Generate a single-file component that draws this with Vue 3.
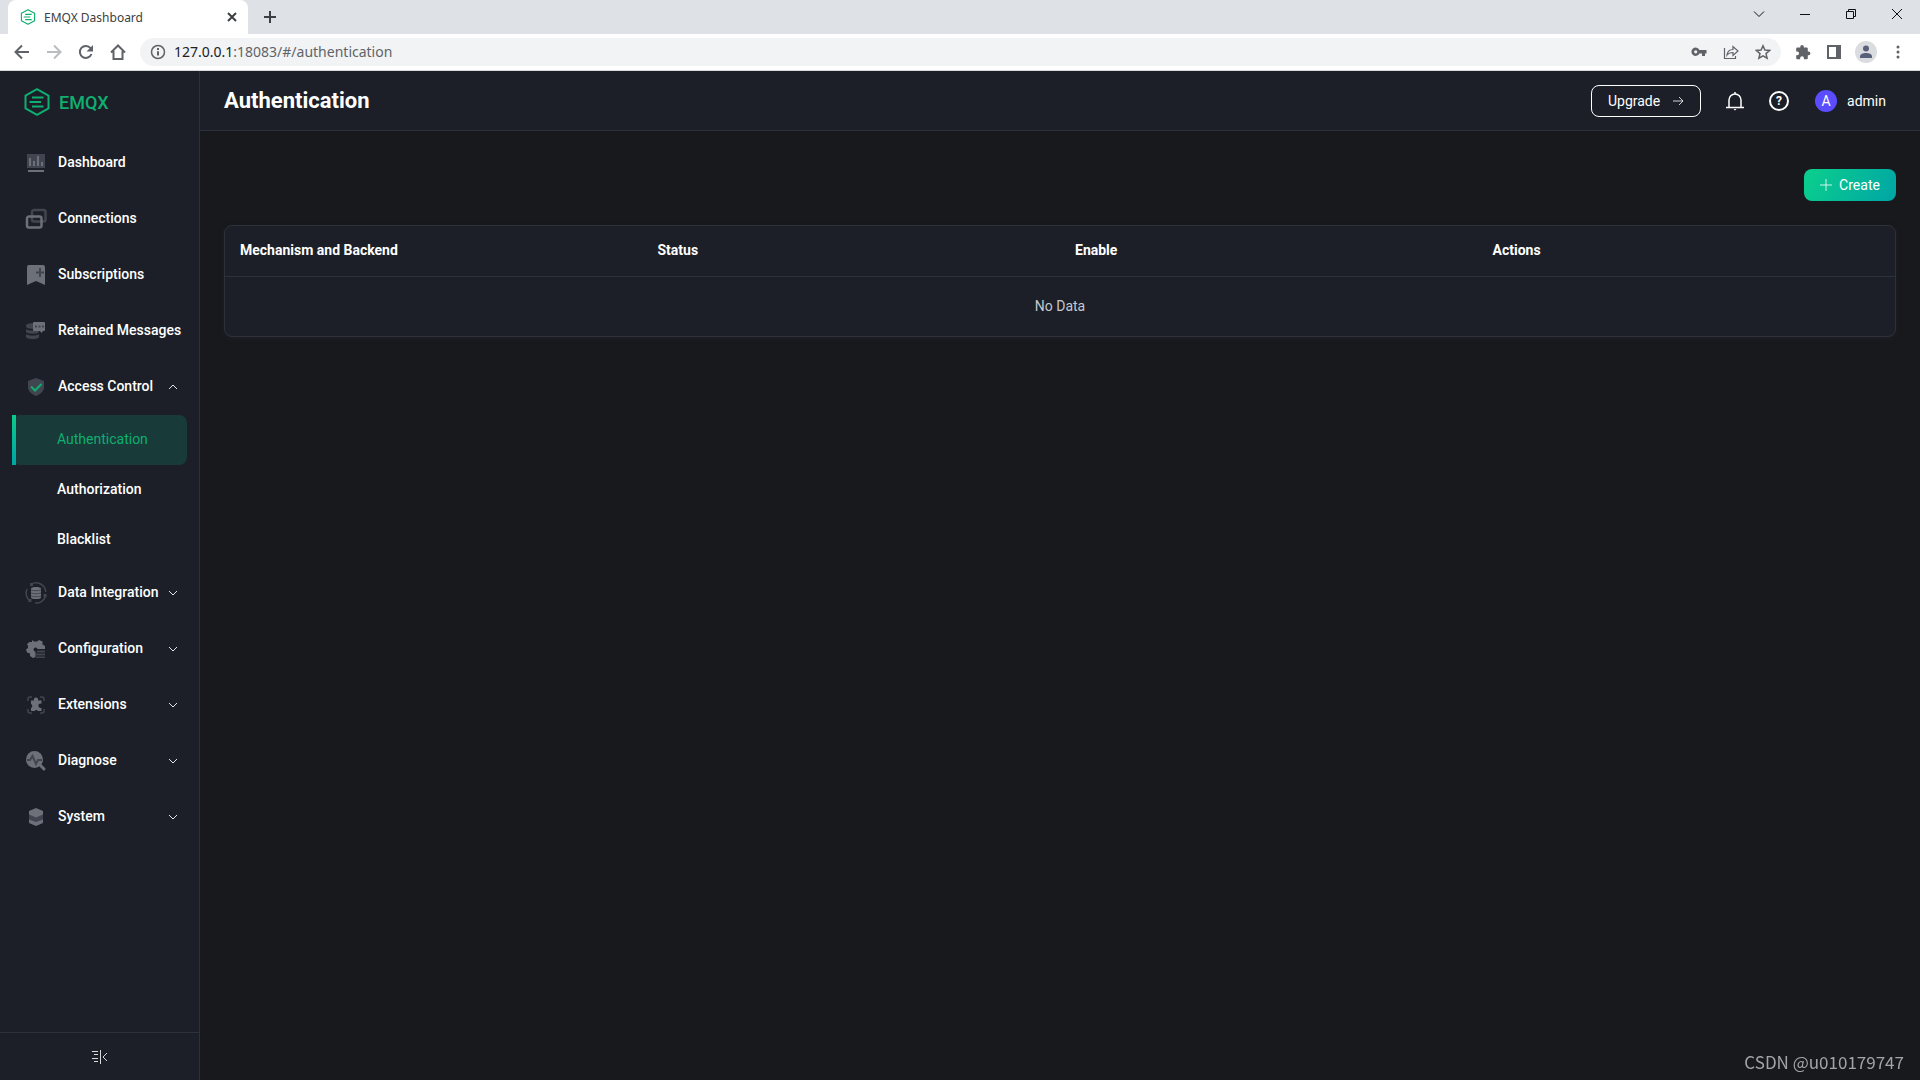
<template>
  <div class="browser">
    <header class="tab-strip">
      <div class="browser-tab">
        <svg class="favicon" viewBox="0 0 28 28">
          <path class="logo-line" :d="logoHex" />
          <path class="logo-line" :d="logoBars" />
        </svg>
        <span class="tab-title">EMQX Dashboard</span>
        <button class="plain" aria-label="Close tab">
          <svg class="glyph" viewBox="0 0 16 16"><path class="dark bold" d="M4 4l8 8M12 4l-8 8" /></svg>
        </button>
      </div>
      <button class="plain new-tab" aria-label="New tab">
        <svg class="glyph" viewBox="0 0 16 16"><path class="dark bold" d="M8 2v12M2 8h12" /></svg>
      </button>
      <div class="window-buttons">
        <button v-for="b in windowButtons" :key="b.label" class="plain" :aria-label="b.label">
          <svg class="glyph" viewBox="0 0 16 16"><path class="window-line" :d="b.d" /></svg>
        </button>
      </div>
    </header>

    <div class="toolbar">
      <div class="nav-buttons">
        <button class="plain" aria-label="Back">
          <svg class="glyph" viewBox="0 0 16 16"><path class="gray" d="M15 8H2M8 1.5L1.5 8L8 14.5" /></svg>
        </button>
        <button class="plain" aria-label="Forward">
          <svg class="glyph" viewBox="0 0 16 16"><path class="gray off" d="M1 8h13M8 1.5L14.500 8L8 14.500" /></svg>
        </button>
        <button class="plain" aria-label="Reload">
          <svg class="glyph" viewBox="0 0 16 16">
            <path class="gray" d="M13.500 10A6 6 0 1 1 12.600 4.200" />
            <path class="gray-fill" d="M15 1v6.500H8.500z" />
          </svg>
        </button>
        <button class="plain" aria-label="Home">
          <svg class="glyph" viewBox="0 0 16 16"><path class="gray" d="M1 8.500L8 1.500l7 7M3.500 7v8h9V7" /></svg>
        </button>
      </div>
      <div class="address">
        <svg class="glyph" viewBox="0 0 16 16">
          <circle class="gray thin" cx="8" cy="8" r="6.500" />
          <path class="gray" d="M8 7.200v4.300M8 4v2" />
        </svg>
        <span class="url"><b>127.0.0.1</b>:18083/#/authentication</span>
        <button class="plain" aria-label="Passwords">
          <svg class="glyph" viewBox="0 0 16 16">
            <path
              class="gray-fill"
              fill-rule="evenodd"
              d="M8.400 6H15.500V9.500H14V12H11V9.500H8.400A4.200 4.200 0 1 1 8.400 6zM4.700 6.200a1.600 1.600 0 1 0 0 3.200a1.600 1.600 0 0 0 0-3.200z"
            />
          </svg>
        </button>
        <button class="plain" aria-label="Share">
          <svg class="glyph" viewBox="0 0 16 16">
            <path class="gray fine" d="M1.500 4v10.500h11V12M4 11c.5-4 3-5.500 6-5.500V2.500L15 7l-5 4.500V8.500C7.500 8.500 5.500 9 4 11z" />
          </svg>
        </button>
        <button class="plain" aria-label="Bookmark">
          <svg class="glyph" viewBox="0 0 16 16">
            <path class="gray thin" d="M8 1.800l1.900 4.300 4.700.4-3.600 3.100 1.100 4.600L8 11.800l-4.100 2.400L5 9.600 1.400 6.500l4.700-.4z" />
          </svg>
        </button>
      </div>
      <div class="toolbar-right">
        <button class="plain wide-button" aria-label="Browser extensions">
          <svg class="glyph" viewBox="0 0 20 20"><path class="gray-fill" :d="puzzle" /></svg>
        </button>
        <button class="plain" aria-label="Side panel">
          <svg class="glyph" viewBox="0 0 16 16">
            <path class="gray" d="M2 2h12v12H2z" />
            <path class="gray-fill" d="M10 2h5v12h-5z" />
          </svg>
        </button>
        <button class="plain profile" aria-label="Profile">
          <svg class="glyph" viewBox="0 0 16 16">
            <circle class="profile-fill" cx="8" cy="4.500" r="3" />
            <path class="profile-fill" d="M2 14v-1.500C2 10 5 9 8 9s6 1 6 3.500V14z" />
          </svg>
        </button>
        <button class="plain" aria-label="Menu">
          <svg class="glyph" viewBox="0 0 16 16">
            <circle class="gray-fill" cx="8" cy="3" r="1.500" />
            <circle class="gray-fill" cx="8" cy="8" r="1.500" />
            <circle class="gray-fill" cx="8" cy="13" r="1.500" />
          </svg>
        </button>
      </div>
    </div>

    <div class="app">
      <aside class="sidebar">
        <a class="brand" href="#/">
          <svg class="logo" viewBox="0 0 28 28">
            <path class="logo-line" :d="logoHex" />
            <path class="logo-line" :d="logoBars" />
          </svg>
          <span>EMQX</span>
        </a>
        <nav class="menu">
          <template v-for="item in menu" :key="item.label">
            <a class="menu-item" :href="item.href">
              <svg class="menu-icon" viewBox="0 0 20 20">
                <path v-for="(s, i) in item.icon" :key="i" :class="s.c" :d="s.d" fill-rule="evenodd" />
              </svg>
              <span class="menu-label">{{ item.label }}</span>
              <svg v-if="item.arrow" class="chevron" viewBox="0 0 12 12">
                <path :d="item.arrow === 'up' ? 'M2 8l4-4 4 4' : 'M2 4l4 4 4-4'" />
              </svg>
            </a>
            <div v-if="item.children" class="submenu">
              <a
                v-for="child in item.children"
                :key="child"
                :class="['sub-item', { active: child === current }]"
                :href="'#/' + child.toLowerCase()"
              >
                {{ child }}
              </a>
            </div>
          </template>
        </nav>
        <button class="plain collapse" aria-label="Collapse menu">
          <svg class="glyph" viewBox="0 0 16 16">
            <path class="collapse-line" d="M0 2.500h6M2 5.500h4M0 9.500h6M2 12.500h4M8.500 1v14M15 4l-4 4 4 4" />
          </svg>
        </button>
      </aside>

      <div class="page">
        <header class="page-header">
          <h1>{{ current }}</h1>
          <button class="upgrade">
            Upgrade
            <svg class="small-glyph" viewBox="0 0 12 12"><path d="M1 6h10M7 2l4 4-4 4" /></svg>
          </button>
          <button class="plain header-icon" aria-label="Notifications">
            <svg viewBox="0 0 20 20">
              <path class="white-line" d="M1 16.500h18M4 16.500V9a6 6 0 0 1 12 0v7.500M10 3V1" />
              <path class="white-fill" d="M8.500 18h3l-1.500 1.500z" />
            </svg>
          </button>
          <button class="plain help" aria-label="Help">?</button>
          <button class="plain user">
            <span class="avatar">A</span>
            admin
          </button>
        </header>
        <main class="content">
          <button class="create">
            <svg class="small-glyph" viewBox="0 0 12 12"><path d="M6 0v12M0 6h12" /></svg>
            Create
          </button>
          <div class="card">
            <table>
              <thead>
                <tr>
                  <th v-for="c in columns" :key="c">{{ c }}</th>
                </tr>
              </thead>
              <tbody>
                <tr>
                  <td :colspan="columns.length">No Data</td>
                </tr>
              </tbody>
            </table>
          </div>
        </main>
      </div>
    </div>
    <div class="watermark">CSDN @u010179747</div>
  </div>
</template>

<script setup>
import { ref } from "vue";

const current = ref("Authentication");

const columns = ["Mechanism and Backend", "Status", "Enable", "Actions"];

const logoHex = "M14 1.200L25.500 7.600V20.400L14 26.800L2.500 20.400V7.600z";
const logoBars = "M9 9.500h11.500M6.500 14H18M9 18.500h11.500";

const puzzle =
  "M17 9.500h-1V6a1.500 1.500 0 0 0-1.500-1.500H11V3.300a2.200 2.200 0 0 0-4.400 0v1.200H3A1.500 1.500 0 0 0 1.500 6v3.300h1.200a2.400 2.400 0 0 1 0 4.800H1.500v3.400A1.500 1.500 0 0 0 3 19h3.400v-1.200a2.400 2.400 0 0 1 4.800 0V19h3.300a1.500 1.500 0 0 0 1.500-1.500V14h1a2.250 2.250 0 0 0 0-4.500z";

const windowButtons = [
  { label: "Search tabs", d: "M3 5.500l5 5 5-5" },
  { label: "Minimize", d: "M3 8.500h10" },
  { label: "Restore", d: "M3.500 5.500h7v7h-7zM5.500 5.500v-2h7v7h-2" },
  { label: "Close", d: "M3 3l10 10M13 3L3 13" },
];

const menu = [
  {
    label: "Dashboard",
    href: "#/dashboard",
    icon: [
      { c: "dim", d: "M1 1h18v14H1z" },
      { c: "bars", d: "M4 5v8M8 8v5M12 3v10M16 9v4" },
      { c: "lit", d: "M2 17h16v2H2z" },
    ],
  },
  {
    label: "Connections",
    href: "#/connections",
    icon: [
      { c: "dim-line", d: "M8 1h9.500a2 2 0 0 1 2 2v7.500a2 2 0 0 1-2 2H8a2 2 0 0 1-2-2V3a2 2 0 0 1 2-2z" },
      { c: "lit-line", d: "M3 7.500h10.500a2 2 0 0 1 2 2v7a2 2 0 0 1-2 2H3a2 2 0 0 1-2-2v-7a2 2 0 0 1 2-2z" },
    ],
  },
  {
    label: "Subscriptions",
    href: "#/subscriptions",
    icon: [
      { c: "lit", d: "M3 0h14a2 2 0 0 1 2 2v18l-9-4-9 4V2a2 2 0 0 1 2-2z" },
      { c: "groove wide", d: "M14 3v9M10 7.500h8" },
    ],
  },
  {
    label: "Retained Messages",
    href: "#/retained",
    icon: [
      { c: "dim", d: "M0 4.500C0 1.500 13 1.500 13 4.500v1C13 8.500 0 8.500 0 5.500z" },
      { c: "dim", d: "M0 8c3 2 10 2 13 0v2.500c0 3-13 3-13 0z" },
      { c: "dim", d: "M0 13c3 2 10 2 13 0v2.500c0 3.500-13 3.500-13 0z" },
      { c: "lit", d: "M8 1h10a1 1 0 0 1 1 1v7a1 1 0 0 1-1 1h-1l-1.500 2-1.500-2H8a1 1 0 0 1-1-1V2a1 1 0 0 1 1-1z" },
      { c: "dim", d: "M9 4.500h2v2H9zM12.500 4.500h2v2h-2zM16 4.500h2v2h-2z" },
    ],
  },
  {
    label: "Access Control",
    href: "#/access",
    arrow: "up",
    icon: [
      { c: "dim", d: "M10 1l8 3v6c0 4-3 7-8 9c-5-2-8-5-8-9V4z" },
      { c: "green-line", d: "M5 9.500l4 4L15.500 7" },
    ],
    children: ["Authentication", "Authorization", "Blacklist"],
  },
  {
    label: "Data Integration",
    href: "#/integration",
    arrow: "down",
    icon: [
      { c: "orbit", d: "M5 1.300A9.800 9.800 0 0 1 19.800 9M19.800 12.500A9.800 9.800 0 0 1 9 20M4 18A9.800 9.800 0 0 1 1 6" },
      { c: "dim", d: "M4 0h3v3H4zM17.500 11h3v3h-3zM2.500 16h3v3h-3z" },
      { c: "lit", d: "M5 5.500C5 3.500 15 3.500 15 5.500v9c0 2-10 2-10 0z" },
      { c: "groove", d: "M5 7c3 1 7 1 10 0M5 10c3 1 7 1 10 0M5 13c3 1 7 1 10 0" },
    ],
  },
  {
    label: "Configuration",
    href: "#/config",
    arrow: "down",
    icon: [
      {
        c: "lit",
        d: "M6 1l2 1.500h3L13 1l3.500 1.500v3L19 7v3h-7.500a2 2 0 1 0-2 2.500V18L7 19l-3-2v-2.500L1 13.500 0 10.500 2 9V7L1 5l2.500-2H6z",
      },
      { c: "dim", d: "M11 11.500h8v2h-8zM10 14.500h9v2h-9zM10 17.500h9v1.500h-9z" },
    ],
  },
  {
    label: "Extensions",
    href: "#/extensions",
    arrow: "down",
    icon: [
      { c: "orbit", d: "M2 6V4a2 2 0 0 1 2-2h2M14 2h2a2 2 0 0 1 2 2v2M18 14v2a2 2 0 0 1-2 2h-2M6 18H4a2 2 0 0 1-2-2v-2" },
      {
        c: "lit",
        d: "M8 5.500a2.200 2.200 0 1 1 4 0h3.500v3.200a2.200 2.200 0 1 0 0 4V16H12a2 2 0 0 0-3.500 0H5v-3a2.200 2.200 0 0 0 0-4V5.500z",
      },
    ],
  },
  {
    label: "Diagnose",
    href: "#/diagnose",
    arrow: "down",
    icon: [
      { c: "lit", d: "M8.500 0a8.500 8.500 0 1 0 0 17a8.500 8.500 0 0 0 0-17z" },
      { c: "handle", d: "M14 14l4 4" },
      { c: "groove wide", d: "M1 9h3l2.500-4 3.500 8 2-4h4" },
    ],
  },
  {
    label: "System",
    href: "#/system",
    arrow: "down",
    icon: [
      { c: "dim", d: "M3 7l7 3 7-3v6l-7 3-7-3z" },
      { c: "lit", d: "M10 1l7 3v3.500L10 10.500 3 7.500V4z" },
      { c: "lit", d: "M3 12.500l7 2.500 7-2.500V16l-7 3-7-3z" },
    ],
  },
];
</script>

<style>
body {
  margin: 0;
  background: #18191c;
}
</style>

<style scoped>
.browser {
  min-height: 100vh;
  display: flex;
  flex-direction: column;
  font-family: Roboto, sans-serif;
  font-size: 14px;
  color: #fff;
}

a {
  color: inherit;
  text-decoration: none;
}

button {
  font: inherit;
  color: inherit;
}

svg {
  display: block;
  flex-shrink: 0;
}

svg path {
  fill: none;
}

.plain {
  display: flex;
  align-items: center;
  justify-content: center;
  padding: 0;
  border: 0;
  background: none;
}

.glyph {
  width: 16px;
  height: 16px;
}

/* Browser frame */
.tab-strip {
  display: flex;
  height: 34px;
  padding-left: 8px;
  background: #dee1e6;
}

.browser-tab {
  display: flex;
  align-items: center;
  box-sizing: border-box;
  width: 240px;
  padding: 0 8px 0 12px;
  background: #fff;
  border-radius: 8px 8px 0 0;
  color: #3c4043;
  font-family: "Noto Sans", sans-serif;
  font-size: 12px;
}

.favicon {
  width: 16px;
  height: 16px;
  margin-right: 8px;
}

.tab-title {
  flex: 1;
}

.new-tab {
  margin-left: 14px;
}

.window-buttons {
  display: flex;
  margin-left: auto;
  height: 28px;
}

.window-buttons .plain {
  width: 46px;
}

.toolbar {
  display: flex;
  align-items: center;
  height: 36px;
  padding: 0 14px;
  border-bottom: 1px solid #d5dad7;
  background: #fff;
}

.nav-buttons {
  display: flex;
  gap: 16px;
}

.address {
  display: flex;
  flex: 1;
  align-items: center;
  height: 28px;
  margin-left: 14px;
  padding: 0 10px;
  border-radius: 14px;
  background: #f1f3f4;
  gap: 16px;
}

.url {
  flex: 1;
  margin-left: -8px;
  padding-bottom: 2px;
  color: #5f6368;
  font-family: "Noto Sans", sans-serif;
  font-size: 14px;
}

.url b {
  color: #202124;
  font-weight: 400;
}

.toolbar-right {
  display: flex;
  align-items: center;
  margin-left: 12px;
  gap: 13px;
}

.wide-button {
  width: 20px;
}

.profile {
  width: 22px;
  height: 22px;
  border-radius: 50%;
  background: #dadce0;
}

.glyph .dark,
.glyph .gray {
  fill: none;
  stroke: #3c4043;
  stroke-width: 2;
}

.glyph .gray {
  stroke: #5f6368;
}

.glyph .thin {
  stroke-width: 1.5;
}

.glyph .fine {
  stroke-width: 1.2;
}

.glyph .off {
  stroke: #babcbe;
}

.glyph .gray-fill {
  fill: #5f6368;
}

.glyph .profile-fill {
  fill: #59617a;
}

.window-line {
  stroke: #111;
  stroke-width: 1;
}

.logo-line {
  stroke: #0fae71;
  stroke-width: 2;
  stroke-linejoin: round;
}

/* Sidebar */
.app {
  display: flex;
  flex: 1;
}

.sidebar {
  display: flex;
  flex-direction: column;
  box-sizing: border-box;
  width: 200px;
  border-right: 1px solid #2d3139;
  background: #1c1f27;
}

.brand {
  display: flex;
  align-items: center;
  box-sizing: border-box;
  height: 60px;
  padding: 2px 0 0 23px;
  gap: 8px;
  color: #0fae71;
  font-size: 18px;
  font-weight: 500;
}

.logo {
  width: 28px;
  height: 28px;
}

.menu {
  flex: 1;
  padding-top: 4px;
}

.menu-item {
  display: flex;
  align-items: center;
  height: 56px;
  padding: 0 20px 0 26px;
  font-weight: 500;
}

.menu-icon {
  width: 20px;
  height: 20px;
  margin-right: 12px;
  overflow: visible;
}

.menu-label {
  flex: 1;
  padding-bottom: 2px;
  white-space: nowrap;
}

.chevron {
  width: 12px;
  height: 12px;
}

.chevron path {
  stroke: #e4e5e7;
}

.menu-icon .dim {
  fill: #41454f;
}

.menu-icon .lit {
  fill: #6b7079;
}

.menu-icon .dim-line {
  stroke: #41454f;
  stroke-width: 2.5;
}

.menu-icon .lit-line {
  stroke: #6b7079;
  stroke-width: 2.5;
}

.menu-icon .bars {
  stroke: #6b7079;
  stroke-width: 2;
}

.menu-icon .orbit {
  stroke: #41454f;
  stroke-width: 1.5;
}

.menu-icon .green-line {
  stroke: #0fae71;
  stroke-width: 2;
}

.menu-icon .groove {
  stroke: #41454f;
}

.menu-icon .wide {
  stroke-width: 2;
}

.menu-icon .handle {
  stroke: #6b7079;
  stroke-width: 3;
  stroke-linecap: round;
}

.submenu {
  padding: 0 12px;
}

.sub-item {
  display: flex;
  align-items: center;
  box-sizing: border-box;
  height: 50px;
  padding: 0 0 2px 45px;
  border-radius: 8px;
  font-weight: 500;
}

.sub-item.active {
  padding-left: 41px;
  border-left: 4px solid;
  border-image: linear-gradient(#0cc98a, #00a5a5) 1;
  background: #183a38;
  color: #0fae71;
  font-weight: 400;
}

.collapse {
  height: 48px;
  border-top: 1px solid #2d3139;
}

.collapse-line {
  stroke: #d8d9db;
}

/* Page */
.page {
  display: flex;
  flex: 1;
  flex-direction: column;
}

.page-header {
  display: flex;
  align-items: center;
  box-sizing: border-box;
  height: 60px;
  padding: 0 34px 0 24px;
  border-bottom: 1px solid #2d3139;
  background: #1c1f27;
}

h1 {
  flex: 1;
  margin: 0;
  font-size: 22px;
  font-weight: 700;
}

.upgrade {
  display: flex;
  align-items: center;
  justify-content: center;
  width: 110px;
  height: 32px;
  gap: 12px;
  border: 1px solid #fff;
  border-radius: 8px;
  background: none;
}

.small-glyph {
  width: 12px;
  height: 12px;
}

.small-glyph path {
  stroke: currentColor;
  opacity: 0.8;
}

.header-icon {
  margin-left: 24px;
}

.header-icon svg {
  width: 20px;
  height: 20px;
}

.white-line {
  stroke: #fff;
  stroke-width: 1.5;
}

.header-icon .white-fill {
  fill: #fff;
}

.help {
  box-sizing: border-box;
  width: 20px;
  height: 20px;
  margin-left: 24px;
  border: 2px solid #fff;
  border-radius: 50%;
  font-size: 12px;
  font-weight: 700;
}

.user {
  margin-left: 26px;
  gap: 10px;
}

.avatar {
  width: 22px;
  border-radius: 50%;
  background: #5b4dff;
  line-height: 22px;
}

.content {
  display: flex;
  flex-direction: column;
  padding: 38px 24px;
}

.create {
  display: flex;
  align-items: center;
  align-self: flex-end;
  justify-content: center;
  width: 92px;
  height: 32px;
  gap: 7px;
  border: 0;
  border-radius: 8px;
  background: linear-gradient(120deg, #0bd08c, #00a5a5);
}

.card {
  margin-top: 24px;
  overflow: hidden;
  border: 1px solid #2d3139;
  border-radius: 8px;
  background: #1c1f27;
  box-shadow: 0 2px 6px rgba(60, 60, 80, 0.2);
}

table {
  width: 100%;
  border-collapse: collapse;
  table-layout: fixed;
}

th {
  height: 48px;
  padding: 0 15px 2px;
  border-bottom: 1px solid #2d3139;
  font-weight: 700;
  text-align: left;
}

td {
  height: 57px;
  padding: 0 0 2px;
  color: #c5c8ce;
  text-align: center;
}

.watermark {
  position: fixed;
  right: 16px;
  bottom: 8px;
  color: #a3a4a6;
  font-family: "Noto Sans CJK SC", sans-serif;
  font-size: 17px;
  line-height: 20px;
}
</style>
